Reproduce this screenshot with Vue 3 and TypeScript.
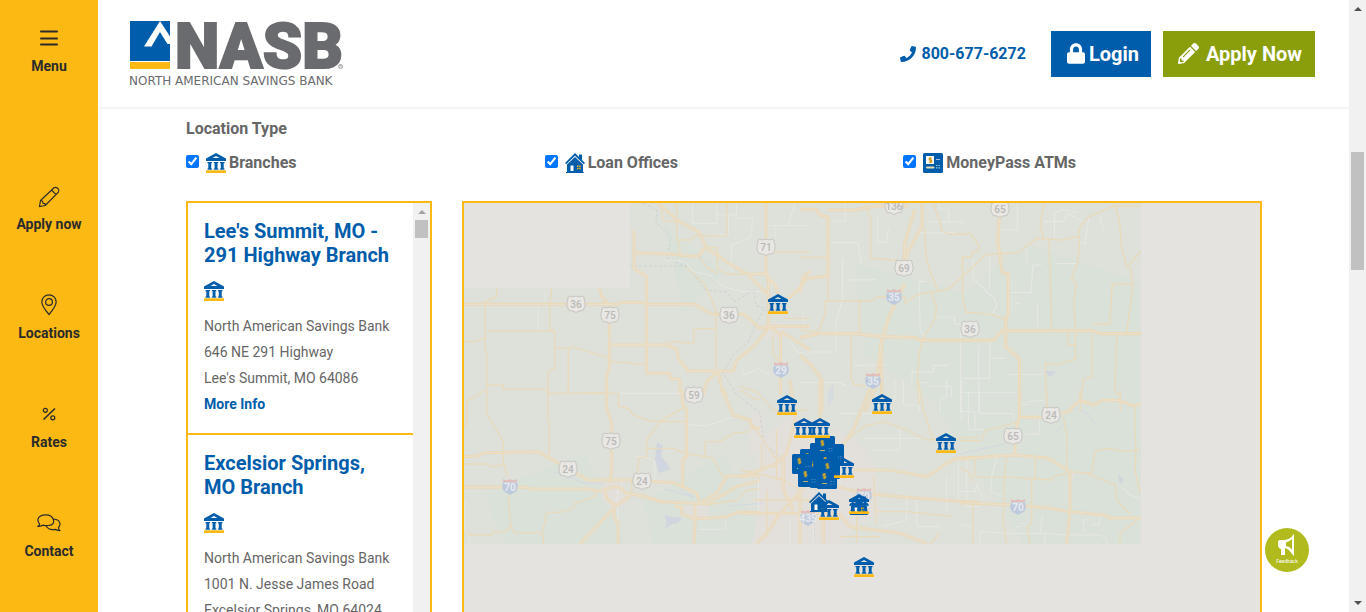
<script setup lang="ts">
import { ref } from 'vue'

type Kind = 'bank' | 'house' | 'atm' | 'atm-stack'

interface Place { title: string; street: string; city: string }
interface Marker { kind: Kind; x: number; y: number }
interface Shield { label: string; x: number; y: number }
interface Tile { place: string; major: string; minor: string; local: string }

const sideLinks = [
  { label: 'Apply now', icon: 'pencil' },
  { label: 'Locations', icon: 'pin' },
  { label: 'Rates', icon: 'percent' },
  { label: 'Contact', icon: 'chat' },
]

const filters = ref([
  { id: 'branches', label: 'Branches', kind: 'bank' as Kind, on: true },
  { id: 'loans', label: 'Loan Offices', kind: 'house' as Kind, on: true },
  { id: 'atms', label: 'MoneyPass ATMs', kind: 'atm' as Kind, on: true },
])

const places: Place[] = [
  { title: "Lee's Summit, MO - 291 Highway Branch", street: '646 NE 291 Highway', city: "Lee's Summit, MO 64086" },
  { title: 'Excelsior Springs, MO Branch', street: '1001 N. Jesse James Road', city: 'Excelsior Springs, MO 64024' },
]

// Top-left corners of the markers on the map canvas
const markers: Marker[] = [
  { kind: 'atm-stack', x: 360, y: 241 }, { kind: 'atm-stack', x: 346, y: 240 },
  { kind: 'atm-stack', x: 336, y: 246 }, { kind: 'atm-stack', x: 346, y: 265 },
  { kind: 'atm-stack', x: 340, y: 254 }, { kind: 'atm-stack', x: 354, y: 250 },
  { kind: 'atm-stack', x: 351, y: 233 }, { kind: 'atm-stack', x: 356, y: 256 },
  { kind: 'atm-stack', x: 328, y: 251 }, { kind: 'atm-stack', x: 334, y: 264 },
  { kind: 'atm-stack', x: 353, y: 266 },
  { kind: 'bank', x: 304, y: 91 }, { kind: 'bank', x: 313, y: 192 },
  { kind: 'bank', x: 408, y: 191 }, { kind: 'bank', x: 330, y: 215 },
  { kind: 'bank', x: 346, y: 215 }, { kind: 'bank', x: 472, y: 230 },
  { kind: 'bank', x: 370, y: 255 }, { kind: 'house', x: 345, y: 289 },
  { kind: 'bank', x: 355, y: 297 }, { kind: 'house', x: 385, y: 292 },
  { kind: 'bank', x: 385, y: 291 }, { kind: 'bank', x: 390, y: 354 },
]

const routes: Shield[] = [
  { label: '136', x: 430, y: 3 }, { label: '65', x: 536, y: 6 },
  { label: '71', x: 302, y: 44 }, { label: '69', x: 440, y: 65 },
  { label: '36', x: 112, y: 101 }, { label: '75', x: 146, y: 112 },
  { label: '36', x: 265, y: 112 }, { label: '36', x: 506, y: 126 },
  { label: '59', x: 230, y: 192 }, { label: '75', x: 147, y: 238 },
  { label: '24', x: 104, y: 266 }, { label: '24', x: 178, y: 278 },
  { label: '24', x: 587, y: 212 }, { label: '65', x: 549, y: 233 },
]

const interstates: Shield[] = [
  { label: '35', x: 430, y: 94 }, { label: '29', x: 317, y: 167 },
  { label: '35', x: 409, y: 178 }, { label: '70', x: 46, y: 284 },
  { label: '70', x: 554, y: 304 }, { label: '70', x: 400, y: 293 },
  { label: '435', x: 344, y: 315 },
]

const tiles: Tile[] = [
  {
    place: 'translate(-4 -8) scale(.3333)',
    major: 'M595 24L650 75 715 110 740 158 800 200 865 240 925 300M918 24V240L945 270 955 300M12 328H470L485 322H545L560 328H705L755 358H850L870 372 900 400 925 394H1050M418 280L425 305 448 330V520L440 540V600M522 110V220L560 245V535H628L632 552H660V600M515 110H522M522 173L620 176 715 185 735 158M925 240V390L962 420V600M925 400L880 455 830 495 820 528H685L655 490 650 462 618 450H450M775 528L740 560 730 600M775 528L785 580 800 600M965 410L1050 465M985 310L1025 275 1030 245 1050 228M860 237H925',
    minor: 'M110 280V305L75 320V455L80 480V600M275 280L270 325V400L284 410V520L265 530V600M80 408H284M12 440H45L75 428M284 460H325L340 456 450 490M325 460V590M80 570H130V583H262M262 596L440 594M650 24V130L660 155V175M600 24L610 78 650 80M740 122H800V24M650 135L690 135 710 120 740 122M735 158H772V222L800 237H865M715 185L745 220 772 235M618 445L640 440 702 445V402L770 400M680 215L735 270 768 345V520M450 490L460 502H505L520 508H558M920 172H1050M938 420V470L955 500M970 370H1050',
    local: 'M698 24V85H770V24M770 60H830V24M805 60V118H775M920 92H1050M830 70H880L870 130 815 150V230M255 295V325M234 330V410M620 195L650 197 675 200 700 230 750 240 790 275 850 290 915 290M845 520L850 540 895 520 930 540M990 440L1010 470 1050 480M1030 350V410M985 90L1005 24M945 130V90M475 596H660',
  },
  {
    place: 'translate(336 -8) scale(.361)',
    major: 'M0 40H45L55 55 78 62V225L20 230 5 245 0 270M78 42H150L215 30H300M338 24V85L300 155 290 190M318 40L300 100 290 135V170L283 190M290 245L245 340 225 410 210 530 180 600M0 395L60 383 160 385 225 392 320 395 335 403H535L560 376H810L830 384H945M552 60L548 130 560 215 577 220V330L570 345V420L608 455V600M0 445L30 470 60 510V600M226 400V600',
    minor: 'M0 173H78V290M0 373L50 380 70 330V293H195L215 282H290V300M180 24L195 60V175L280 182M345 90L350 180 380 262M370 24L390 80V95L410 108H475L495 140V155H480L475 172H450V280L460 325 525 330 570 345M290 300L325 275 410 262 445 230 515 165 605 160 655 120 720 125 770 115 775 90 800 60 870 30 945 30M675 24L665 85 675 120M690 125L697 370M775 115L770 185 752 230 765 245 758 300 763 370M870 24L885 70 890 140 905 200 945 155M915 200L922 250 905 380M922 247H865L858 358H810M763 375V455L710 470 680 465V500L685 600M742 375V415H760M808 385V505L785 510 775 600M878 385L872 545 887 555V600M365 275L378 310 375 340 340 400 330 440 325 520 330 580M165 293V380M142 390V510L150 525 180 530',
    local: 'M85 72H125V24M85 132H160L170 190M118 175V290L100 350V430M215 60V130L240 132 245 90M330 105H430M355 75H455M385 24V38L412 42V75M345 240H330L333 380 350 395M480 180V230L540 290 545 310 530 330M525 160V260M555 97H602V24M580 270H640L645 195 670 193M628 135V190M706 190H765M675 73H730L740 50 785 75M705 120V50L730 40 770 50M800 60L790 135 775 130M830 60L843 100M375 338H428V355L445 360V600M450 508H525V452H570M355 520L330 520V600M310 520V490H370V472H410M575 497H675M495 415V600M150 472L240 470M598 300H610M658 300V365M20 435H100M0 520H110L130 530M527 400V450M420 560V530H355M210 235H130',
  },
  {
    place: 'translate(-4 187) scale(.3333)',
    major: 'M12 200L50 198 75 188 235 185 300 222 375 265 380 270H515L640 278 665 288 710 310 720 340M12 292H200L210 297H385L410 302 435 300 455 290 480 292 500 310 550 318 610 335 740 342 830 290 900 272M440 0V55L455 100V240L450 280M435 300L440 325 467 348 360 462M467 348L510 318M462 350V380L474 400V462M705 345V400L702 462M645 348L665 352V372L700 385 740 385 800 380 840 365 900 368M667 0V40L680 60V200L668 210V285M785 0L800 30 820 75 870 90 875 115H900M720 340L770 310 800 258H900',
    minor: 'M80 0V70L130 155V215L143 260M12 222H80L95 230 130 225M75 0L20 35V100L12 110M263 0V85L268 95V195M270 10H470M323 0V8M475 10V48L505 55 520 75 560 90 600 95H675M675 50L600 95 560 150V200L535 205V240L520 270M555 175H640L675 190 735 200V155L780 155 820 130 870 125M735 200L760 205 785 255 800 258M145 315L152 410 135 425H100L95 435H30L18 425M152 410L165 428H240L250 440V462M247 430L260 367H300L340 355 345 340 405 320V305M515 270V310L610 340M740 345L830 330 860 300 900 297M840 0L880 25 900 30',
    local: 'M475 10H667M680 103L740 108 820 80M525 200H560L585 215V275M715 418H797V392M28 462V440L15 420V330M473 400V290M485 272V300',
  },
  {
    place: 'translate(276 177) scale(.3333)',
    major: 'M240 0V150M390 25L340 150 290 220M0 290L60 270 110 250 140 220 165 120 150 0M0 400H240L300 405 330 440 480 460 560 490M190 325L120 400 80 460 50 490M340 270H450L560 290 620 250 650 235 720 232M290 320L370 340 480 350 720 368M130 240V330L160 390M180 330V490M250 410V490',
    minor: 'M0 20L50 35 100 90H200M0 115L30 120 50 150 110 240M0 270L70 285 130 300 180 330M160 350L260 380M400 290L410 430M350 400V490M310 190L370 140 430 125 500 150 560 180 720 172M425 0V45M535 0L550 90 580 180M300 470H420M410 395H500L640 410M600 460L570 492M80 330V470M40 360H240M110 150V300M65 190V260H110',
    local: 'M465 0V60L440 70M490 0V75H530M620 0V50L600 60V100M400 210H480V140M370 175H540M620 290V390M655 240V360M680 230V380H720M530 360V440H600M300 240V320M220 300V492M55 300V400H0M150 410V490M500 350V420L430 440M665 120V0M300 100H400',
  },
  {
    place: 'translate(496 187) scale(.3333)',
    major: 'M180 0L178 80 165 130V195M0 208L110 198 165 195 265 205 330 245V360L320 462M0 338L160 345 270 355 330 365 430 375 455 384H543M178 82H255L325 65 360 30 400 45 430 30 480 32 520 48 543 42',
    minor: 'M0 152H65L75 122 170 98M260 0V55M360 0V30M480 0V30M310 80L320 130V245M330 245L395 250 405 185 440 175 500 185 540 178M525 48V130L528 180 525 240 540 310M340 245L380 250 465 285 470 330 510 372M45 210L42 260 60 262 160 262 275 270 280 260 330 248M226 205V265M140 200L133 265 130 400 140 462M215 265V400L202 410 210 462M0 235L25 245 40 275M38 340V462M543 380L480 430V462',
    local: 'M0 8H172M58 0V70H160V90M25 8V118H70M0 65H45V120M180 45H200L205 35 255 30M238 80V132H195M110 200L95 260 92 305 130 320M0 305H45L50 285 70 330M60 462V425L150 430 250 430 320 435 420 435 440 445V462M248 380L240 430M370 425V390H385M395 405H418V380M485 290L510 315 543 325M0 405H30L35 420M255 430V462M168 410H185V400H200',
  },
]
</script>

<template>
  <div class="page">
    <svg class="defs" aria-hidden="true">
      <symbol id="bank" viewBox="0 0 20 20">
        <path fill="#005dab" fill-rule="evenodd" d="M10 0L20 5.500V8H0V5.500zM10 3L6.500 5H13.500z" />
        <path fill="#005dab" d="M1.500 9h4.500v1.200h-.8v5.300h.8v1.200H1.500v-1.200h.8v-5.300h-.8zM7.800 9h4.500v1.200h-.8v5.300h.8v1.200H7.800v-1.200h.8v-5.300h-.8zM14 9h4.500v1.200h-.8v5.300h.8v1.200H14v-1.200h.8v-5.300H14z" />
        <path fill="#fdb913" d="M0 17.300h20V20H0z" />
      </symbol>
      <symbol id="house" viewBox="0 0 20 20">
        <path fill="#005dab" d="M10 0L14 4V1.500h3V7L20 10 18.800 11.200 10 2.800 1.200 11.200 0 10z" />
        <path fill="#005dab" d="M10 4L18 11.500V19h.8v1H1v-1h1v-7.500z" />
        <path fill="#fff" d="M5.500 12.500h3V18h-3z" />
        <path fill="#fdb913" d="M12 12.500h1.500V14H12zM14.200 12.500h1.500V14h-1.500zM12 14.700h1.500v1.500H12zM14.200 14.700h1.500v1.500h-1.500z" />
      </symbol>
      <symbol id="atm" viewBox="0 0 20 20">
        <rect width="20" height="20" rx="1.500" fill="#005dab" />
        <rect x="3" y="3" width="8" height="8" fill="#fff" />
        <path d="M8.800 5.200H6.200V7H8.600V9H5.800M7.300 4v6.300" fill="none" stroke="#c99812" stroke-width="1.100" />
        <path d="M13 6.500h4M13 12.500h1.500M15.500 12.500H17M13 14.800h1.500M15.500 14.800H17" stroke="#9fc1de" stroke-width="1.200" />
        <path d="M4 14.500h6.500" stroke="#e7dfb2" stroke-width="2" stroke-linecap="round" />
      </symbol>
      <symbol id="atm-stack" viewBox="0 0 20 20">
        <rect width="20" height="20" rx="1.500" fill="#005dab" />
        <path d="M8.800 5.200H6.200V7H8.600V9H5.800M7.300 4v6.300" fill="none" stroke="#c9a52f" stroke-width="1.200" />
        <path d="M13.500 12.500h1.500M16 12.500h1.500M13.500 15h1.500M16 15h1.500" stroke="#3f83be" />
        <path d="M5 14.500h5" stroke="#b9b071" />
      </symbol>
      <symbol id="us-route" viewBox="-10 -9 20 18">
        <path d="M-8-7l2-1 2 1 2-.5L0-8l2 .5L4-7l2-1 2 1v2l1 3v4L7 6.500 3 7 0 8.500-3 7-7 6.500-9 2v-4l1-3z" fill="#e9e7e4" stroke="#c6c5c1" />
      </symbol>
      <symbol id="interstate" viewBox="-11 -9 22 18">
        <path d="M-7-4.500H7Q9 1 6 4.500L0 8-6 4.500Q-9 1-7-4.500z" fill="#bdc9dd" />
        <path d="M-7-8Q-4-6-2-7L0-8 2-7Q4-6 7-8V-5H-7z" fill="#e2bdba" />
      </symbol>
    </svg>

    <nav class="side" aria-label="Main">
      <button class="side-item menu" type="button">
        <svg class="side-icon" viewBox="0 0 24 24"><path d="M4 4.500H20M4 11.500H20M4 17.500H20" stroke-width="2" stroke-linecap="round" /></svg>
        <span>Menu</span>
      </button>
      <a v-for="l in sideLinks" :key="l.label" class="side-item" href="#">
        <svg class="side-icon" viewBox="0 0 24 24">
          <g v-if="l.icon === 'pencil'"><path d="M2.500 21.500l1-6L17 2.800q2-1.200 3.800.6t.6 3.700L8.300 20.500zM4 15.300l1.500 1 .5 2 2 .5.500 1.500M14.500 5l4.500 4.600" /></g>
          <g v-else-if="l.icon === 'pin'"><path d="M12 20.500Q4.800 12 4.800 8a7.200 7.200 0 0 1 14.400 0Q19.200 12 12 20.500z" /><circle cx="12" cy="8" r="3.400" /></g>
          <g v-else-if="l.icon === 'percent'"><path d="M6.500 16.500L18 5.500" stroke-width="1.600" /><circle cx="8.300" cy="7.300" r="2" /><circle cx="15.800" cy="14.800" r="2" /></g>
          <g v-else><path d="M1 14.300q1.800-1 1.500-2.500Q.5 9.500 1 7 2.300 2.800 8.800 2.800T16.500 8 11 13.500q-2.500.4-4.800-.4Q4.200 14.600 1 14.300zM16.500 7q6 .5 6.500 4.800 0 2-1.500 3.800 0 1.800 1.200 2.900-2.600.2-4.300-1.200-6.500 1.500-9.400-3.500" /></g>
        </svg>
        <span>{{ l.label }}</span>
      </a>
    </nav>

    <div class="body">
      <header class="top">
        <a class="brand" href="#" aria-label="NASB home">
          <svg width="216" height="70" viewBox="0 0 216 70">
            <path fill="#005dab" d="M0 2h40v40H0z" />
            <path fill="#fdb913" d="M0 43h40v7H0z" />
            <path fill="#fff" d="M30 2L40 17.500V25h-2.500L30 13 21.500 27.500H14z" />
            <text x="45" y="49" class="wordmark">NASB</text>
            <text x="-1" y="66" class="tagline">NORTH AMERICAN SAVINGS BANK</text>
            <circle cx="210.500" cy="47.500" r="2" fill="none" stroke="#8a8b8d" stroke-width=".8" />
            <path d="M210 48.500v-2h1v1l.3 1" fill="none" stroke="#8a8b8d" stroke-width=".5" />
          </svg>
        </a>
        <a class="phone" href="tel:8006776272">
          <svg width="16" height="16" viewBox="0 0 512 512"><path fill="currentColor" d="M493.400 24.600l-104-24c-11.300-2.600-22.900 3.300-27.500 13.900l-48 112c-4.200 9.800-1.400 21.300 6.900 28l60.600 49.600c-36 76.700-98.900 140.500-177.200 177.200l-49.600-60.600c-6.800-8.300-18.200-11.100-28-6.900l-112 48C3.900 366.500-2 378.100.6 389.400l24 104C27.100 504.200 36.700 512 48 512c256.100 0 464-207.500 464-464 0-11.200-7.700-20.900-18.600-23.400z" /></svg>
          <span>800-677-6272</span>
        </a>
        <a class="btn login" href="#">
          <svg width="18" height="21" viewBox="0 0 448 512"><path fill="currentColor" d="M400 224h-24v-72C376 68.200 307.800 0 224 0S72 68.200 72 152v72H48c-26.500 0-48 21.500-48 48v192c0 26.500 21.500 48 48 48h352c26.500 0 48-21.500 48-48V272c0-26.500-21.500-48-48-48zm-104 0H152v-72c0-39.700 32.300-72 72-72s72 32.300 72 72v72z" /></svg>
          <span>Login</span>
        </a>
        <a class="btn apply" href="#">
          <svg width="21" height="21" viewBox="0 0 512 512"><path fill="currentColor" d="M497.900 142.100l-46.100 46.100c-4.700 4.700-12.300 4.700-17 0l-111-111c-4.700-4.700-4.700-12.300 0-17l46.100-46.100c18.700-18.700 49.100-18.700 67.900 0l60.100 60.100c18.800 18.700 18.800 49.100 0 67.900zM284.200 99.800L21.600 362.400.4 483.900c-2.900 16.400 11.400 30.600 27.800 27.800l121.500-21.300 262.600-262.600c4.700-4.700 4.700-12.300 0-17l-111-111c-4.800-4.700-12.400-4.700-17.100 0zM124.100 339.900c-5.500-5.500-5.500-14.300 0-19.800l154-154c5.500-5.500 14.300-5.500 19.800 0s5.500 14.300 0 19.800l-154 154c-5.500 5.500-14.300 5.500-19.800 0zM88 424h48v36.300l-64.500 11.300-31.100-31.100L51.700 376H88v48z" /></svg>
          <span>Apply Now</span>
        </a>
      </header>

      <main class="finder">
        <fieldset class="filters">
          <legend>Location Type</legend>
          <div class="filter-row">
            <label v-for="f in filters" :key="f.id" class="filter" :for="f.id">
              <input :id="f.id" v-model="f.on" type="checkbox" />
              <svg class="kind" width="20" height="20"><use :href="'#' + f.kind" /></svg>
              <span>{{ f.label }}</span>
            </label>
          </div>
        </fieldset>

        <div class="results">
          <section class="list" aria-label="Results">
            <div class="cards">
              <article v-for="p in places" :key="p.title" class="card">
                <h2>{{ p.title }}</h2>
                <svg class="card-kind" width="20" height="20"><use href="#bank" /></svg>
                <p>North American Savings Bank<br />{{ p.street }}<br />{{ p.city }}</p>
                <a href="#">More Info</a>
              </article>
            </div>
            <div class="bar list-bar" aria-hidden="true">
              <i class="arrow up faint"></i>
              <i class="thumb short"></i>
            </div>
          </section>

          <section class="map" aria-label="Map">
            <svg class="canvas" width="796" height="600" viewBox="0 0 796 600">
              <clipPath id="loaded"><path d="M166 0H677V341H0V85H166z" /></clipPath>
              <g clip-path="url(#loaded)">
                <rect width="677" height="341" fill="#dde1d9" />
                <path fill="#d8e1d8" d="M390 60L500 90 560 40 677 80V341H560L470 200 400 150zM20 290L120 250 160 341H40zM200 20L260 70 220 110zM180 300L260 250 300 341H190z" opacity=".7" />
                <path fill="#e3e0dc" d="M292 237L330 210 390 235 412 262 415 310 388 325 380 341H288L296 305zM138 280L160 278 165 298 150 305 138 296zM217 303h28v14h-18zM303 120h18v15h-18zM286 210h14v40h-14zM604 270l9-3-5 12z" />
                <path fill="#cfd6df" d="M193 239l6 4-2 10 10 13-12 4-4-14zM200 312l8 2 10 1-4 5-6 1-7 5 2-7zM234 51l4 2-2 6zM580 168h12l-6 6zM654 271l6 6-4 4z" />
                <path fill="#d5dbde" d="M364 190l5-10 1 16-6 8z" />
                <path fill="none" stroke="#d3d8e1" d="M90 269L120 280 140 281M200 286L230 294 215 286M266 303L300 300M496 251L540 241M608 204L625 212 632 222M592 230L602 218" />
                <path fill="none" stroke="#cdd2d0" stroke-dasharray="3 2" d="M179 0L193 7 192 19 207 34 203 55 223 64 242 87 263 89 270 99 290 87 292 103 301 105 292 120 284 139 269 152 259 170 273 192 296 210 300 240 320 258M165 63H223M350 280V341" />
                <g v-for="t in tiles" :key="t.place" :transform="t.place" fill="none" stroke-linejoin="round">
                  <path :d="t.local" stroke="#e7e8e3" stroke-width="3" />
                  <path :d="t.minor" stroke="#e9dabb" stroke-width="4" />
                  <path :d="t.major" stroke="#ebd8b5" stroke-width="9" />
                  <path :d="t.major" stroke="#e9dfcc" stroke-width="4" />
                </g>
                <g v-for="(s, i) in routes" :key="'u' + i">
                  <use href="#us-route" :x="s.x - 10" :y="s.y - 9" width="20" height="18" />
                  <text class="route" :x="s.x" :y="s.y + 4">{{ s.label }}</text>
                </g>
                <g v-for="(s, i) in interstates" :key="'i' + i">
                  <use href="#interstate" :x="s.x - 11" :y="s.y - 9" width="22" height="18" />
                  <text class="route inter" :x="s.x" :y="s.y + 4">{{ s.label }}</text>
                </g>
              </g>
              <use v-for="(m, i) in markers" :key="'m' + i" :href="'#' + m.kind" :x="m.x" :y="m.y" width="20" height="20" />
            </svg>
          </section>
        </div>
      </main>
    </div>

    <div class="bar page-bar" aria-hidden="true">
      <i class="arrow up"></i>
      <i class="thumb long"></i>
      <i class="arrow down"></i>
    </div>

    <button class="feedback" type="button">
      <svg width="18" height="22" viewBox="0 0 18 22" aria-hidden="true">
        <path fill="#fff" fill-rule="evenodd" d="M1 6h6Q13 5 15 1l1-1v22l-2-2Q11 15 7 14v7H3v-6l-2-1-1-2V8zM14 5Q11 8 8 8.500V12q4 .5 6 4z" />
      </svg>
      <span>Feedback</span>
    </button>
  </div>
</template>

<style>
body { margin: 0; }
</style>

<style scoped>
.page {
  display: flex;
  height: 100vh;
  overflow: hidden;
  background: #fff;
  color: #666;
  font-family: Roboto, "Liberation Sans", sans-serif;
  font-size: 14px;
}
.defs { position: absolute; width: 0; height: 0; }
a { text-decoration: none; }

.side {
  display: flex;
  flex-direction: column;
  gap: 60px;
  flex: none;
  width: 98px;
  box-sizing: border-box;
  padding-top: 27px;
  background: #fdb913;
}
.side-item {
  display: flex;
  flex-direction: column;
  align-items: center;
  gap: 5px;
  padding: 0;
  border: 0;
  background: none;
  color: #2b2b2b;
  font: 700 14px/20px Roboto, sans-serif;
}
.menu { margin-bottom: 49px; }
.side-icon { width: 24px; height: 24px; fill: none; stroke: #2b2b2b; stroke-width: 1.2; }

.body { flex: 1; min-width: 0; }
.top {
  display: flex;
  align-items: center;
  height: 107px;
  padding: 0 34px 0 32px;
  border-bottom: 2px solid #f5f5f5;
}
.brand { display: flex; margin-right: auto; }
.brand svg { overflow: visible; }
.wordmark { font: 900 63px Roboto, sans-serif; fill: #6a6b6e; stroke: #6a6b6e; stroke-width: 2px; }
.tagline { font: 12px "DejaVu Sans", sans-serif; fill: #6a6b6e; }
.phone {
  display: flex;
  align-items: center;
  gap: 6px;
  margin-right: 25px;
  color: #005dab;
  font-size: 16px;
  font-weight: 700;
}
.btn {
  display: flex;
  align-items: center;
  height: 46px;
  color: #fff;
  font-size: 20px;
  font-weight: 700;
}
.login { gap: 4px; padding: 0 12px 0 16px; background: #005dab; }
.apply { gap: 7px; margin-left: 12px; padding: 0 13px 0 15px; background: #8a9e0b; }

.finder { padding: 10px 87px 0 88px; }
.filters { margin: 0; padding: 0; border: 0; font-size: 16px; font-weight: 700; }
.filters legend { padding: 0; line-height: 20px; }
.filter-row { display: grid; grid-template-columns: repeat(3, 1fr); padding-top: 13px; }
.filter { display: flex; align-items: center; height: 20px; }
.filter input { width: 13px; height: 13px; margin: 0 7px 2px 0; accent-color: #0075ff; }
.kind { margin: 2px 3px 0 0; overflow: visible; flex: none; }

.results { display: flex; gap: 30px; padding-top: 29px; }
.list {
  display: flex;
  flex: none;
  width: 246px;
  height: 600px;
  box-sizing: border-box;
  overflow: hidden;
  border: 2px solid #fdb913;
}
.cards { flex: 1; min-width: 0; }
.card { padding: 16px; border-bottom: 2px solid #fdb913; }
.card h2 { margin: 0 0 14px; color: #005dab; font-size: 20px; font-weight: 700; line-height: 24px; }
.card-kind { display: block; margin-bottom: 12px; }
.card p { margin: 0; line-height: 26px; white-space: nowrap; }
.card a { display: block; color: #005dab; font-weight: 700; line-height: 26px; }

.map {
  flex: 1;
  min-width: 0;
  height: 600px;
  box-sizing: border-box;
  overflow: hidden;
  border: 2px solid #fdb913;
  background: #e5e3df;
}
.canvas { display: block; }
.route { font: 500 10px Roboto, sans-serif; fill: #b8b8b6; text-anchor: middle; }
.inter { font-weight: 700; fill: #e8eaee; }

.bar {
  display: flex;
  flex-direction: column;
  align-items: center;
  flex: none;
  width: 17px;
  box-sizing: border-box;
  background: #f1f1f1;
}
.thumb { width: 13px; background: #c1c1c1; }
.short { height: 18px; margin-top: 6px; }
.long { height: 118px; margin-top: 141px; }
.list-bar { padding-top: 7px; }
.page-bar { padding: 7px 0; }
.arrow { width: 0; height: 0; border: 4px solid transparent; }
.up { border-top: 0; border-bottom-color: #505050; }
.faint { border-bottom-color: #a3a3a3; }
.down { margin-top: auto; border-bottom: 0; border-top-color: #505050; }

.feedback {
  position: fixed;
  right: 57px;
  bottom: 40px;
  display: flex;
  flex-direction: column;
  align-items: center;
  gap: 1px;
  width: 44px;
  height: 44px;
  padding: 6px 0 0;
  border: 0;
  border-radius: 50%;
  background: #b2bb1e;
  color: #fff;
  font: 5px/8px Roboto, sans-serif;
}
</style>
